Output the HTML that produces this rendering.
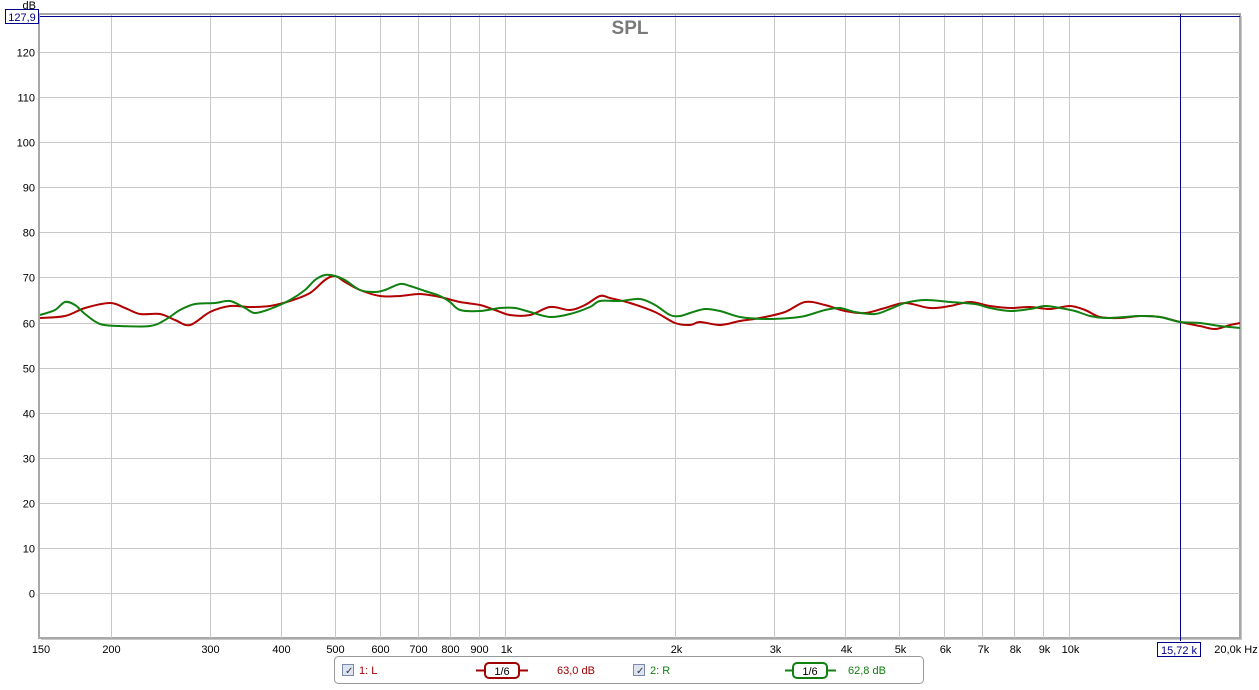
<!DOCTYPE html>
<html><head><style>
body{margin:0;width:1259px;height:685px;background:#fff;overflow:hidden;font-family:"Liberation Sans",sans-serif}
</style></head><body>
<svg width="1259" height="685" xmlns="http://www.w3.org/2000/svg" font-family="Liberation Sans, sans-serif">
<rect x="0" y="0" width="1259" height="685" fill="#fff"/>
<rect x="41" y="16" width="1201" height="624" fill="#c8c8c8"/>
<rect x="39" y="14" width="1201" height="624" fill="#fff" stroke="#a8a8a8" stroke-width="2"/>
<g stroke="#c8c8c8" stroke-width="1" id="grid"></g>
<g font-size="11" fill="#000" text-anchor="end" id="ylab"></g>
<g font-size="11" fill="#000" text-anchor="middle" id="xlab"></g>
<text x="630" y="34" font-size="19" font-weight="bold" fill="#7a7a7a" text-anchor="middle">SPL</text>
<text x="36" y="9" font-size="11" text-anchor="end">dB</text>
<line x1="40" y1="16.5" x2="1240" y2="16.5" stroke="#00008b" stroke-width="1"/>
<rect x="5.5" y="9.5" width="33" height="14" fill="#fff" stroke="#00008b"/>
<text x="22" y="21" font-size="11" fill="#00008b" text-anchor="middle">127,9</text>
<line x1="1180.5" y1="14" x2="1180.5" y2="641" stroke="#00008b"/>
<rect x="1157.5" y="642.5" width="43" height="14" fill="#fff" stroke="#00008b"/>
<text x="1179" y="654" font-size="11" fill="#00008b" text-anchor="middle">15,72 k</text>
<path id="red" fill="none" stroke="#b00000" stroke-width="2" stroke-linejoin="round"/>
<path id="green" fill="none" stroke="#108010" stroke-width="2" stroke-linejoin="round"/>
<rect x="334.5" y="656.5" width="589" height="27" rx="4" fill="#fff" stroke="#999"/>
<rect x="342.5" y="664.5" width="11" height="11" fill="#dde4f0" stroke="#7a8aa8"/>
<text x="345" y="674" font-size="10" fill="#334">✓</text>
<text x="359" y="674" font-size="11" fill="#a00000">1: L</text>
<line x1="476" y1="670.5" x2="528" y2="670.5" stroke="#a00000" stroke-width="2"/>
<rect x="485" y="663" width="34" height="15" rx="4" fill="#fff" stroke="#a00000" stroke-width="2"/>
<text x="502" y="675" font-size="11" text-anchor="middle">1/6</text>
<text x="557" y="674" font-size="11" fill="#a00000">63,0 dB</text>
<rect x="633.5" y="664.5" width="11" height="11" fill="#dde4f0" stroke="#7a8aa8"/>
<text x="636" y="674" font-size="10" fill="#334">✓</text>
<text x="650" y="674" font-size="11" fill="#108010">2: R</text>
<line x1="785" y1="670.5" x2="836" y2="670.5" stroke="#108010" stroke-width="2"/>
<rect x="793" y="663" width="34" height="15" rx="4" fill="#fff" stroke="#108010" stroke-width="2"/>
<text x="810" y="675" font-size="11" text-anchor="middle">1/6</text>
<text x="848" y="674" font-size="11" fill="#108010">62,8 dB</text>
</svg>
<script>
const ns="http://www.w3.org/2000/svg";
const g=document.getElementById('grid'),yl=document.getElementById('ylab'),xl=document.getElementById('xlab');
function el(p,t,a,txt){const e=document.createElementNS(ns,t);for(const k in a)e.setAttribute(k,a[k]);if(txt)e.textContent=txt;p.appendChild(e);}
for(let d=0;d<=120;d+=10){const y=Math.round(593-4.508*d)+0.5;el(g,'line',{x1:40,x2:1240,y1:y,y2:y});el(yl,'text',{x:35,y:y+4},String(d));}
const fs=[200,300,400,500,600,700,800,900,1000,2000,3000,4000,5000,6000,7000,8000,9000,10000];
const lab={1000:'1k',2000:'2k',3000:'3k',4000:'4k',5000:'5k',6000:'6k',7000:'7k',8000:'8k',9000:'9k',10000:'10k'};
el(xl,'text',{x:41,y:653},'150');
for(const f of fs){const x=Math.round(505+564*Math.log10(f/1000))+0.5;el(g,'line',{x1:x,x2:x,y1:15,y2:638});el(xl,'text',{x:x+(f>=1000?1:0),y:653},lab[f]||String(f));}
el(xl,'text',{x:1236,y:653},'20,0k Hz');
function smooth(s){const a=s.trim().split(/\s+/).map(p=>p.split(',').map(Number));let d='M'+a[0];for(let i=0;i<a.length-1;i++){const p0=a[Math.max(0,i-1)],p1=a[i],p2=a[i+1],p3=a[Math.min(a.length-1,i+2)];const c1=[p1[0]+(p2[0]-p0[0])/6,p1[1]+(p2[1]-p0[1])/6],c2=[p2[0]-(p3[0]-p1[0])/6,p2[1]-(p3[1]-p1[1])/6];d+=' C'+c1+' '+c2+' '+p2;}return d;}
document.getElementById('red').setAttribute('d',smooth("40,318 65,316 85,308 110,303 125,308 140,314 160,314 175,320 190,325 210,312 230,306 250,307 270,306 290,301 310,293 325,280 335,276 345,282 360,290 380,296 400,296 420,294 440,297 460,302 480,305 495,310 510,315 530,315 550,307 570,310 585,305 600,296 610,298 630,303 655,312 675,323 690,325 700,322 720,325 740,321 760,318 785,312 805,302 825,305 845,311 865,313 885,308 905,303 930,308 950,306 970,302 990,306 1010,308 1030,307 1050,309 1070,306 1085,310 1100,317 1120,318 1140,316 1160,317 1180,322 1200,326 1215,329 1230,325 1240,323"));
document.getElementById('green').setAttribute('d',smooth("40,315 55,310 65,302 75,305 85,314 100,324 120,326 150,326 165,320 180,310 195,304 215,303 230,301 245,308 255,313 270,309 290,300 305,290 315,280 325,275 335,276 345,280 360,290 375,292 385,290 400,284 410,286 425,291 440,296 450,302 460,310 480,311 500,308 515,308 530,312 550,317 570,314 590,307 600,301 620,301 640,299 655,305 670,315 680,316 690,313 705,309 720,311 740,317 765,319 790,318 805,316 825,310 840,308 855,312 875,314 890,309 905,303 925,300 950,302 975,304 990,308 1010,311 1030,309 1045,306 1060,308 1075,311 1090,316 1105,318 1125,317 1140,316 1160,317 1180,322 1200,323 1220,326 1240,328"));
</script>
</body></html>
